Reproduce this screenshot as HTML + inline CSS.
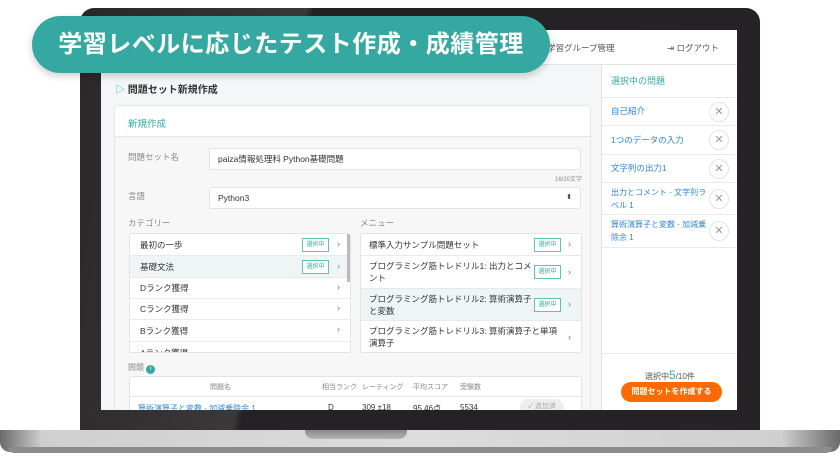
<!DOCTYPE html><html><head><meta charset="utf-8"><style>
*{box-sizing:border-box;margin:0;padding:0}
body{width:840px;height:460px;background:#fff;position:relative;overflow:hidden;font-family:"Liberation Sans","Noto Sans CJK JP",sans-serif;color:#333}
.abs{position:absolute}
.t{position:absolute;white-space:nowrap}
.row{position:absolute;left:0;right:0;border-bottom:1px solid #e6eaea;font-size:8.5px;color:#333;padding-left:10px;display:flex;align-items:center}
.tag{position:absolute;width:27px;height:14px;border:1px solid #5fc2ba;color:#35a9a1;font-size:6px;line-height:12px;text-align:center;background:#fff}
.chev{position:absolute;font-size:9px;color:#777}
.ri{position:absolute;left:0;right:0;border-bottom:1px solid #e6eaea;font-size:8.5px;color:#2f86d6;padding-left:9px;line-height:13px;display:flex;align-items:center}
.x{position:absolute;right:8px;width:20px;height:20px;border:1px solid #e3e3e3;border-radius:50%;color:#999;font-size:11px;text-align:center;line-height:18px;font-weight:300}
</style></head><body>
<div class="abs" style="left:80px;top:8px;width:680px;height:428px;background:linear-gradient(100deg,#2a2729 0%,#3a3839 30%,#242224 31%,#252325 100%);border-radius:14px 14px 0 0"></div>
<div class="abs" style="left:0;top:430px;width:840px;height:22px;background:linear-gradient(90deg,#6a6a6a 0%,#cfcfcf 5%,#dcdcdc 50%,#cfcfcf 93%,#6a6a6a 100%);border-radius:0 0 10px 10px"></div>
<div class="abs" style="left:8px;top:447px;width:824px;height:6px;background:#8c8c8c;border-radius:0 0 12px 12px"></div>
<div class="abs" style="left:305px;top:430px;width:102px;height:9px;background:linear-gradient(#8a8a8a,#b5b5b5);border-radius:0 0 8px 8px"></div>
<div class="abs" style="left:101px;top:30px;width:636px;height:380px;background:#f3f7f7;overflow:hidden">
 <div class="abs" style="left:0;top:0;width:636px;height:35px;background:#fff;border-bottom:1px solid #e3e3e3"></div>
 <div class="t" style="left:446px;top:12px;font-size:8.5px;color:#555">学習グループ管理</div>
 <div class="t" style="left:566px;top:12px;font-size:8.5px;color:#555">⇥ ログアウト</div>
 <div class="t" style="left:14px;top:51px;font-size:10px;font-weight:bold;color:#333"><span style="color:#5fc2ba">▷</span> 問題セット新規作成</div>
 <div class="abs" style="left:13px;top:75px;width:477px;height:320px;background:#fff;border:1px solid #e3e8e8;border-radius:4px">
  <div class="t" style="left:13px;top:10px;font-size:9.5px;color:#35a9a1">新規作成</div>
  <div class="abs" style="left:0;top:30px;width:475px;height:290px;background:#f7f7f7;border-top:1px solid #e6e6e6"></div>
  <div class="t" style="left:13px;top:45px;font-size:8.5px;color:#888">問題セット名</div>
  <div class="abs" style="left:94px;top:42px;width:372px;height:22px;background:#fff;border:1px solid #e3e3e3;border-radius:3px;font-size:8.5px;line-height:20px;padding-left:8px">paiza情報処理科 Python基礎問題</div>
  <div class="t" style="left:440px;top:68px;font-size:6px;color:#888">16/20文字</div>
  <div class="t" style="left:13px;top:84px;font-size:8.5px;color:#888">言語</div>
  <div class="abs" style="left:94px;top:81px;width:372px;height:22px;background:#fff;border:1px solid #e3e3e3;border-radius:3px;font-size:8.5px;line-height:20px;padding-left:8px">Python3<span style="position:absolute;right:8px;font-size:7px">⬍</span></div>
  <div class="t" style="left:13px;top:111px;font-size:8.5px;color:#888">カテゴリー</div>
  <div class="t" style="left:245px;top:111px;font-size:8.5px;color:#888">メニュー</div>
  <div class="abs" style="left:14px;top:127px;width:222px;height:120px;background:#fff;border:1px solid #e3e3e3;border-radius:3px;overflow:hidden">
   <div class="row" style="top:0;height:22px">最初の一歩<div class="tag" style="left:172px;top:4px">選択中</div><span class="chev" style="left:207px;top:5px">›</span></div>
   <div class="row" style="top:22px;height:22px;background:#eff5f4">基礎文法<div class="tag" style="left:172px;top:4px">選択中</div><span class="chev" style="left:207px;top:5px;color:#35a9a1">›</span></div>
   <div class="row" style="top:44px;height:21px">Dランク獲得<span class="chev" style="left:207px;top:4px">›</span></div>
   <div class="row" style="top:65px;height:21px">Cランク獲得<span class="chev" style="left:207px;top:4px">›</span></div>
   <div class="row" style="top:86px;height:22px">Bランク獲得<span class="chev" style="left:207px;top:4px">›</span></div>
   <div class="row" style="top:108px;height:22px">Aランク獲得</div>
   <div class="abs" style="right:0;top:0;width:3px;height:48px;background:#bbb"></div>
  </div>
  <div class="abs" style="left:245px;top:127px;width:222px;height:120px;background:#fff;border:1px solid #e3e3e3;border-radius:3px;overflow:hidden">
   <div class="row" style="top:0;height:22px;padding-left:8px">標準入力サンプル問題セット<div class="tag" style="left:173px;top:4px">選択中</div><span class="chev" style="left:207px;top:5px">›</span></div>
   <div class="row" style="top:22px;height:33px;padding-left:8px;line-height:12px;padding-right:44px">プログラミング筋トレドリル1: 出力とコメント<div class="tag" style="left:173px;top:9px">選択中</div><span class="chev" style="left:207px;top:10px">›</span></div>
   <div class="row" style="top:55px;height:32px;padding-left:8px;line-height:12px;padding-right:44px;background:#eff5f4">プログラミング筋トレドリル2: 算術演算子と変数<div class="tag" style="left:173px;top:9px">選択中</div><span class="chev" style="left:207px;top:9px;color:#35a9a1">›</span></div>
   <div class="row" style="top:87px;height:33px;padding-left:8px;line-height:12px;padding-right:22px">プログラミング筋トレドリル3: 算術演算子と単項演算子<span class="chev" style="left:207px;top:10px">›</span></div>
  </div>
  <div class="t" style="left:13px;top:256px;font-size:8px;color:#888">問題 <span style="display:inline-block;width:9px;height:9px;border-radius:50%;background:#35a9a1;color:#fff;font-size:6px;text-align:center;line-height:9px">i</span></div>
  <div class="abs" style="left:14px;top:270px;width:453px;height:60px;background:#fff;border:1px solid #e3e3e3;border-radius:3px">
   <div class="abs" style="left:0;top:19px;width:451px;border-top:1px solid #e6e6e6"></div>
   <div class="t" style="left:80px;top:5px;font-size:7px;color:#888">問題名</div>
   <div class="t" style="left:192px;top:5px;font-size:7px;color:#888">相当ランク</div>
   <div class="t" style="left:232px;top:5px;font-size:7px;color:#888">レーティング</div>
   <div class="t" style="left:283px;top:5px;font-size:7px;color:#888">平均スコア</div>
   <div class="t" style="left:330px;top:5px;font-size:7px;color:#888">受験数</div>
   <div class="t" style="left:8px;top:26px;font-size:8px;color:#2f86d6">算術演算子と変数 - 加減乗除余 1</div>
   <div class="t" style="left:198px;top:26px;font-size:8px">D</div>
   <div class="t" style="left:232px;top:26px;font-size:8px">309 ±18</div>
   <div class="t" style="left:283px;top:26px;font-size:8px">95.46点</div>
   <div class="t" style="left:330px;top:26px;font-size:8px">5534</div>
   <div class="abs" style="left:390px;top:22px;width:44px;height:16px;background:#eee;border-radius:8px;font-size:7px;color:#aaa;line-height:16px;text-align:center">✓ 追加済</div>
  </div>
 </div>
 <div class="abs" style="left:500px;top:35px;width:136px;height:345px;background:#fff;border-left:1px solid #e3e3e3">
  <div class="t" style="left:9px;top:9px;font-size:9px;color:#35a9a1">選択中の問題</div>
  <div class="abs" style="left:0;top:32px;width:136px;border-top:1px solid #e6eaea"></div>
  <div class="ri" style="top:33px;height:28px">自己紹介<div class="x">✕</div></div>
  <div class="ri" style="top:61px;height:29px">1つのデータの入力<div class="x">✕</div></div>
  <div class="ri" style="top:90px;height:28px">文字列の出力1<div class="x">✕</div></div>
  <div class="ri" style="top:118px;height:32px;padding-right:30px;font-size:8px">出力とコメント - 文字列ラベル 1<div class="x">✕</div></div>
  <div class="ri" style="top:150px;height:33px;padding-right:30px;font-size:8px">算術演算子と変数 - 加減乗除余 1<div class="x">✕</div></div>
  <div class="abs" style="left:0;top:288px;width:136px;border-top:1px solid #e6eaea"></div>
  <div class="t" style="left:43px;top:303px;font-size:8px;color:#555">選択中<span style="font-size:12px;color:#35a9a1">5</span>/10件</div>
  <div class="abs" style="left:19px;top:317px;width:101px;height:20px;background:#ff6a00;border-radius:10px;color:#fff;font-size:8px;font-weight:bold;text-align:center;line-height:20px">問題セットを作成する</div>
 </div>
</div>
<div class="abs" style="left:32px;top:16px;width:518px;height:57px;background:#35a9a1;border-radius:29px;box-shadow:0 3px 8px rgba(0,0,0,.2);color:#fff;font-size:24px;font-weight:bold;line-height:57px;text-align:center;letter-spacing:0.5px">学習レベルに応じたテスト作成・成績管理</div>
</body></html>
